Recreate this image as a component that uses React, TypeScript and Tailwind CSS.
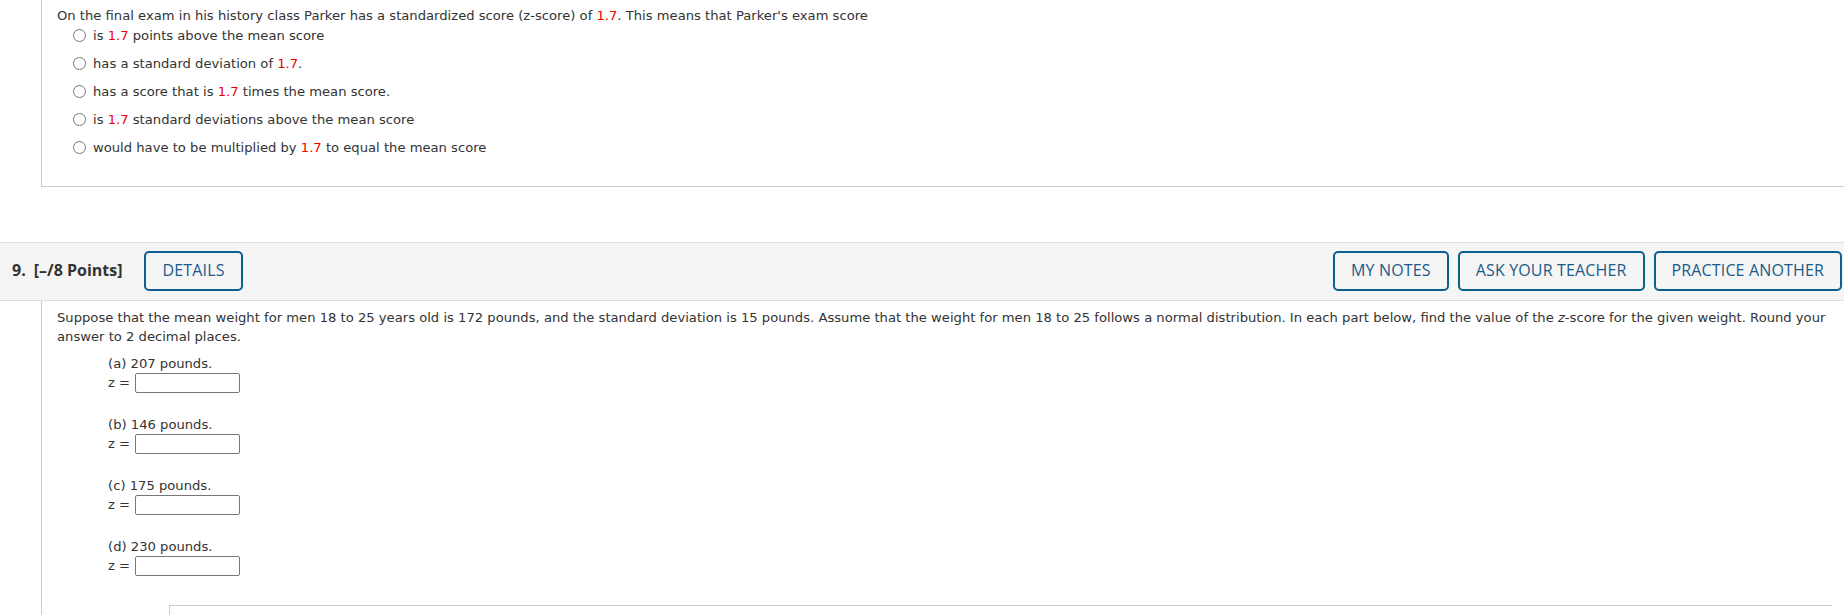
const options = [
  ['is ', '1.7', ' points above the mean score'],
  ['has a standard deviation of ', '1.7', '.'],
  ['has a score that is ', '1.7', ' times the mean score.'],
  ['is ', '1.7', ' standard deviations above the mean score'],
  ['would have to be multiplied by ', '1.7', ' to equal the mean score'],
];

const parts = [
  { letter: 'a', weight: 207 },
  { letter: 'b', weight: 146 },
  { letter: 'c', weight: 175 },
  { letter: 'd', weight: 230 },
];

function HeaderButton({ label }: { label: string }) {
  return (
    <button className="h-[40px] px-[16px] border-2 border-[#0d5f92] rounded-[5px] text-[16px] tracking-[0.15px] font-medium text-[#1c5a8a] bg-[#f5f5f5] whitespace-nowrap">
      {label}
    </button>
  );
}

export default function App() {
  return (
    <div
      className="w-[1844px] h-[615px] overflow-hidden bg-white text-[#333] text-[13.15px] leading-[19.5px]"
      style={{ fontFamily: "'DejaVu Sans', Verdana, sans-serif" }}
    >
      {/* Previous question (tail) */}
      <div className="ml-[41px] border-l border-b border-[#ccc] pl-[15px] pt-[6px] pb-[28px]">
        <p>
          On the final exam in his history class Parker has a standardized score (z-score) of{' '}
          <span className="text-[#e00]">1.7</span>. This means that Parker's exam score
        </p>
        <div className="pl-[16px] flex flex-col gap-[8px]">
          {options.map((o, i) => (
            <label key={i} className="flex items-center gap-[7px] h-[20px]">
              <span className="w-[13px] h-[13px] rounded-full border border-[#777] bg-white" />
              <span>
                {o[0]}
                <span className="text-[#e00]">{o[1]}</span>
                {o[2]}
              </span>
            </label>
          ))}
        </div>
      </div>

      {/* Question 9 header */}
      <div
        className="mt-[55px] h-[59px] bg-[#f5f5f5] border-y border-[#ddd] flex items-center justify-between pl-[12px] pr-[2px]"
        style={{ fontFamily: "'Open Sans', sans-serif" }}
      >
        <div className="flex items-center">
          <span className="text-[16px] font-bold text-[#333]">9.</span>
          <span className="ml-[8px] text-[16px] font-bold text-[#333]">[–/8 Points]</span>
          <span className="ml-[22px]">
            <HeaderButton label="DETAILS" />
          </span>
        </div>
        <div className="flex items-center gap-[9px]">
          <HeaderButton label="MY NOTES" />
          <HeaderButton label="ASK YOUR TEACHER" />
          <HeaderButton label="PRACTICE ANOTHER" />
        </div>
      </div>

      {/* Question 9 body */}
      <div className="ml-[41px] border-l border-[#ccc] pl-[15px] pr-[12px] pt-[7px] h-[400px]">
        <p>
          Suppose that the mean weight for men 18 to 25 years old is 172 pounds, and the standard deviation is 15
          pounds. Assume that the weight for men 18 to 25 follows a normal distribution. In each part below, find the
          value of the <i>z</i>-score for the given weight. Round your answer to 2 decimal places.
        </p>
        <div className="pl-[51px] pt-[7px] flex flex-col gap-[21.5px]">
          {parts.map(p => (
            <div key={p.letter}>
              <p>
                ({p.letter}) {p.weight} pounds.
              </p>
              <div className="flex items-center h-[20px]">
                <span className="w-[27px]">z =</span>
                <span className="w-[105px] h-[20px] border border-[#777] rounded-[2px] bg-white" />
              </div>
            </div>
          ))}
        </div>
        <div className="ml-[112px] mt-[29px] border-t border-l border-[#ccc] h-[40px]" />
      </div>
    </div>
  );
}
